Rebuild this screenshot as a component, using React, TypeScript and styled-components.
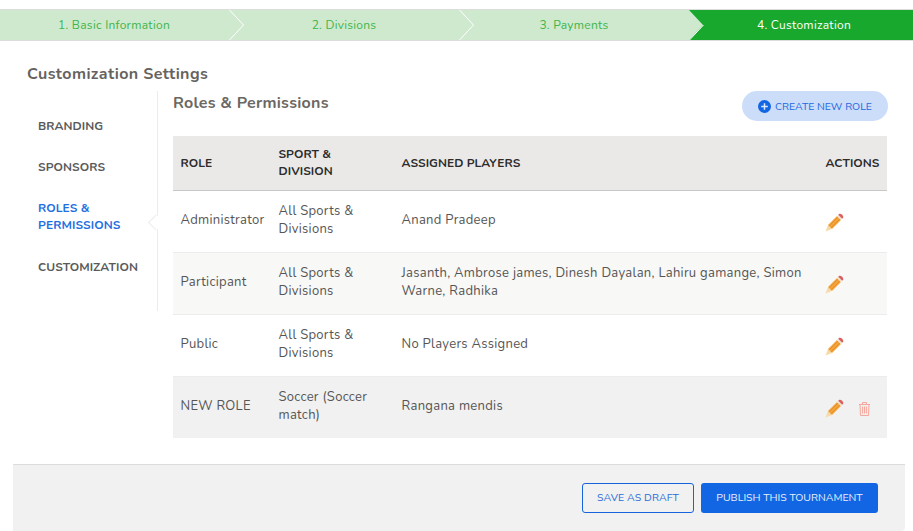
import React from "react";
import styled, { createGlobalStyle } from "styled-components";

const Global = createGlobalStyle`
  html, body { margin: 0; padding: 0; background: #fff; overflow: hidden; }
  body { font-family: "Nunito", "Lato", "Noto Sans", sans-serif; width: 913px; height: 531px; }
  * { box-sizing: border-box; }
`;

const Page = styled.div`
  width: 913px;
  height: 531px;
  overflow: hidden;
  padding-top: 9px;
  display: flex;
  flex-direction: column;
`;

const Stepper = styled.div`
  display: grid;
  grid-template-columns: repeat(4, 230px);
  height: 32px;
  margin-left: -1px;
  background: #cfe9cf;
  border-top: 1px solid #dcdcdc;
  border-bottom: 1px solid #dcdcdc;
  width: 914px;
`;

const Step = styled.div<{ $active?: boolean }>`
  position: relative;
  display: flex;
  align-items: center;
  justify-content: center;
  padding-bottom: 1px;
  font-size: 12px;
  letter-spacing: 0.27px;
  color: ${(p) => (p.$active ? "#fff" : "#3fb54a")};
  background: ${(p) => (p.$active ? "#19a82e" : "transparent")};
  clip-path: ${(p) => (p.$active ? "polygon(0 0, 100% 0, 100% 100%, 0 100%, 14px 50%)" : "none")};
`;

const Chevron = styled.svg`
  position: absolute;
  right: -15px;
  top: 0;
  width: 15px;
  height: 30px;
  z-index: 1;
`;

const Main = styled.div`
  flex: 1;
  display: flex;
  flex-direction: column;
  padding: 0 25px 0 27px;
`;

const Title = styled.h1`
  margin: 23px 0 0;
  font-size: 16px;
  line-height: 20px;
  font-weight: 700;
  letter-spacing: 0.4px;
  color: #66625e;
`;

const Columns = styled.div`
  display: flex;
  margin-top: 7px;
`;

const Side = styled.nav`
  position: relative;
  width: 131px;
  height: 220px;
  border-right: 1px solid #ececec;
  padding: 27px 0 0 11px;
  display: flex;
  flex-direction: column;
  gap: 24px;
`;

const Notch = styled.span`
  position: absolute;
  right: -1px;
  top: 125px;
  width: 10px;
  height: 13px;
  background: #fff;
  &::before {
    content: "";
    position: absolute;
    left: 5px;
    top: 0.5px;
    width: 10px;
    height: 10px;
    transform: rotate(45deg) translate(-2px, 2px);
    border-left: 1px solid #ececec;
    border-bottom: 1px solid #ececec;
    background: #fff;
  }
`;

const SideItem = styled.a<{ $active?: boolean }>`
  display: block;
  font-size: 12px;
  line-height: 17px;
  font-weight: 700;
  letter-spacing: 0.08px;
  margin-bottom: ${(p) => (p.$active ? "1px" : "0")};
  color: ${(p) => (p.$active ? "#1f6fe0" : "#5a5a5a")};
`;

const Content = styled.section`
  flex: 1;
  padding-left: 15px;
`;

const ContentHead = styled.div`
  display: flex;
  justify-content: space-between;
  align-items: flex-start;
  height: 45px;
`;

const SubTitle = styled.h2`
  margin: 2px 0 0;
  font-size: 16px;
  line-height: 20px;
  font-weight: 700;
  letter-spacing: 0.25px;
  color: #6b6762;
`;

const CreateButton = styled.button`
  width: 146px;
  height: 30px;
  border: 0;
  border-radius: 15px;
  background: #cbddf8;
  color: #1f68e0;
  font: inherit;
  font-size: 10.5px;
  letter-spacing: 0;
  display: flex;
  align-items: center;
  justify-content: center;
  gap: 4px;
  padding: 0;
`;

const Table = styled.div`
  display: flex;
  flex-direction: column;
  margin-right: 1px;
`;

const gridCols = "98px 123px 424px 1fr";

const HeadRow = styled.div`
  display: grid;
  grid-template-columns: ${gridCols};
  align-items: center;
  height: 55px;
  background: #ebe9e8;
  border-bottom: 1px solid #c8c8c8;
  padding-left: 7.5px;
`;

const HeadCell = styled.div`
  font-size: 12px;
  line-height: 17px;
  font-weight: 700;
  letter-spacing: 0.05px;
  color: #2c2c2c;
`;

const Row = styled.div<{ $shade?: "light" | "dark" }>`
  display: grid;
  grid-template-columns: ${gridCols};
  align-items: center;
  height: 62px;
  padding-left: 7.5px;
  border-bottom: 1px solid #ececec;
  background: ${(p) => (p.$shade === "light" ? "#f8f8f7" : p.$shade === "dark" ? "#f1f1f1" : "#fff")};
  &:last-child {
    height: 61px;
    border-bottom: 0;
  }
`;

const Cell = styled.div`
  font-size: 13px;
  line-height: 18px;
  letter-spacing: 0.29px;
  color: #555;
  padding-right: 8px;
  margin-bottom: 4px;
`;

const Actions = styled.div`
  display: flex;
  align-items: center;
  gap: 15px;
  margin-left: -1.5px;
  padding-top: 2px;
`;

const Footer = styled.footer`
  margin: 26px 8px 0 13px;
  height: 67px;
  background: #f1f1f1;
  border-top: 1px solid #dcdcdc;
  border-radius: 0 0 4px 0;
  display: flex;
  justify-content: flex-end;
  align-items: center;
  gap: 7px;
  padding: 0 27px 1px 0;
`;

const OutlineButton = styled.button`
  width: 112px;
  height: 30px;
  background: transparent;
  border: 1px solid #1763de;
  border-radius: 3px;
  color: #2a6cd8;
  font: inherit;
  font-size: 10.5px;
  letter-spacing: 0.1px;
  padding: 0;
`;

const SolidButton = styled.button`
  width: 177px;
  height: 30px;
  background: #1265e3;
  border: 0;
  border-radius: 3px;
  color: #e9f0fc;
  font: inherit;
  font-size: 10.5px;
  letter-spacing: 0;
  padding: 0;
`;

const Pencil = () => (
  <svg width="20" height="20" viewBox="0 0 20 20" aria-hidden="true">
    <path d="M1.5 18.5 L4 12 L8 16 Z" fill="#f8d9a8" />
    <path d="M4 12 L13 3 L17 7 L8 16 Z" fill="#f3a63f" />
    <path d="M5 13.2 L14 4.2" stroke="#e68c22" strokeWidth="1" />
    <path d="M6.8 15 L15.8 6" stroke="#e68c22" strokeWidth="1" />
    <path d="M13 3 L14.2 1.8 L18.2 5.8 L17 7 Z" fill="#efe3cf" />
    <path d="M14.2 1.8 L15.4 0.8 Q16.6 0.4 18.2 1.8 Q19.6 3.4 19.2 4.6 L18.2 5.8 Z" fill="#d9605f" />
  </svg>
);

const Trash = () => (
  <svg width="11" height="14" viewBox="0 0 11 14" fill="none" stroke="#f6a79c" strokeWidth="1" aria-hidden="true">
    <path d="M0 2.5 H11" />
    <path d="M3.5 2.3 V0.5 H7.5 V2.3" />
    <path d="M1 2.5 L1.5 13.5 H9.5 L10 2.5" />
    <path d="M3.6 4.5 V11.5 M5.5 4.5 V11.5 M7.4 4.5 V11.5" />
  </svg>
);

const PlusCircle = () => (
  <svg width="13" height="13" viewBox="0 0 13 13" aria-hidden="true">
    <circle cx="6.5" cy="6.5" r="6.5" fill="#1265e3" />
    <path d="M6.5 3.2 V9.8 M3.2 6.5 H9.8" stroke="#dfe9fb" strokeWidth="1.5" />
  </svg>
);

const steps = ["1. Basic Information", "2. Divisions", "3. Payments", "4. Customization"];

const rows: { role: string; sport: React.ReactNode; players: string; shade?: "light" | "dark"; del?: boolean }[] = [
  { role: "Administrator", sport: "All Sports & Divisions", players: "Anand Pradeep" },
  {
    role: "Participant",
    sport: "All Sports & Divisions",
    players: "Jasanth, Ambrose james, Dinesh Dayalan, Lahiru gamange, Simon Warne, Radhika",
    shade: "light",
  },
  { role: "Public", sport: "All Sports & Divisions", players: "No Players Assigned" },
  { role: "NEW ROLE", sport: "Soccer (Soccer match)", players: "Rangana mendis", shade: "dark", del: true },
];

export default function App() {
  return (
    <Page>
      <Global />
      <Stepper>
        {steps.map((s, i) => (
          <Step key={s} $active={i === 3}>
            {s}
            {i < 2 && (
              <Chevron viewBox="0 0 15 30">
                <path d="M0.5 0 L14.5 15 L0.5 30" fill="none" stroke="#fff" strokeWidth="1" />
              </Chevron>
            )}
            {i === 2 && (
              <Chevron viewBox="0 0 15 30">
                <path d="M14.5 15 L0.5 30" fill="none" stroke="#fff" strokeWidth="1" />
              </Chevron>
            )}
          </Step>
        ))}
      </Stepper>
      <Main>
        <Title>Customization Settings</Title>
        <Columns>
          <Side>
            <SideItem>BRANDING</SideItem>
            <SideItem>SPONSORS</SideItem>
            <SideItem $active>
              ROLES &amp;
              <br />
              PERMISSIONS
            </SideItem>
            <SideItem>CUSTOMIZATION</SideItem>
            <Notch />
          </Side>
          <Content>
            <ContentHead>
              <SubTitle>Roles &amp; Permissions</SubTitle>
              <CreateButton>
                <PlusCircle />
                CREATE NEW ROLE
              </CreateButton>
            </ContentHead>
            <Table>
              <HeadRow>
                <HeadCell>ROLE</HeadCell>
                <HeadCell>
                  SPORT &amp;
                  <br />
                  DIVISION
                </HeadCell>
                <HeadCell>ASSIGNED PLAYERS</HeadCell>
                <HeadCell>ACTIONS</HeadCell>
              </HeadRow>
              {rows.map((r) => (
                <Row key={r.role} $shade={r.shade}>
                  <Cell>{r.role}</Cell>
                  <Cell>{r.sport}</Cell>
                  <Cell>{r.players}</Cell>
                  <Actions>
                    <Pencil />
                    {r.del && <Trash />}
                  </Actions>
                </Row>
              ))}
            </Table>
          </Content>
        </Columns>
      </Main>
      <Footer>
        <OutlineButton>SAVE AS DRAFT</OutlineButton>
        <SolidButton>PUBLISH THIS TOURNAMENT</SolidButton>
      </Footer>
    </Page>
  );
}
